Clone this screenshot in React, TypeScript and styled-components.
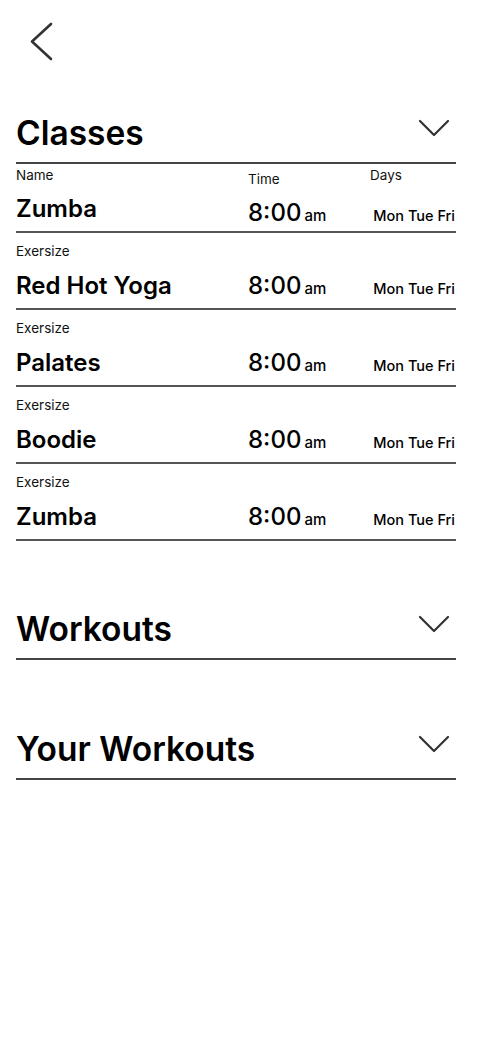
import React from 'react';
import styled, { createGlobalStyle } from 'styled-components';

const GlobalStyle = createGlobalStyle`
  * {
    box-sizing: border-box;
  }
  body {
    margin: 0;
    background: #fff;
    color: #000;
    font-family: Inter, 'Noto Sans', 'Liberation Sans', sans-serif;
  }
`;

const Page = styled.div`
  width: 478px;
  min-height: 1042px;
  padding: 0 22px 0 16px;
`;

const TopBar = styled.div`
  display: flex;
  padding: 19px 0 0 13px;
  height: 63px;
`;

const BackButton = styled.button`
  display: flex;
  padding: 0;
  border: 0;
  background: none;
  cursor: pointer;
`;

const Section = styled.section<{ $space: number }>`
  margin-top: ${(p) => p.$space}px;
`;

const SectionHead = styled.div`
  display: flex;
  justify-content: space-between;
  align-items: flex-start;
  padding: 2px 0 9px;
  border-bottom: 2px solid #444;
`;

const Title = styled.h2`
  margin: 0;
  font-size: 33.5px;
  line-height: 40px;
  font-weight: 600;
`;

const Toggle = styled.svg`
  margin: 6px 6px 0 0;
  flex-shrink: 0;
`;

const Row = styled.div<{ $first?: boolean }>`
  padding: ${(p) => (p.$first ? '3px 0 4px' : '10px 0 8px')};
  border-bottom: 2px solid #555;
`;

const LabelLine = styled.div<{ $first?: boolean }>`
  display: flex;
  align-items: flex-start;
  margin-bottom: ${(p) => (p.$first ? 7 : 12)}px;
`;

const Label = styled.span<{ $width?: number; $drop?: number }>`
  width: ${(p) => (p.$width ? `${p.$width}px` : 'auto')};
  margin-top: ${(p) => p.$drop ?? 0}px;
  font-size: 13.5px;
  line-height: 16px;
  font-weight: 400;
  color: #111;
`;

const ValueLine = styled.div`
  display: flex;
  align-items: baseline;
`;

const Name = styled.span<{ $raise?: boolean }>`
  width: 232px;
  align-self: ${(p) => (p.$raise ? 'flex-start' : 'baseline')};
  font-size: 24px;
  line-height: 29px;
  font-weight: 600;
`;

const Time = styled.span<{ $drop?: number }>`
  width: 122px;
  padding-top: ${(p) => p.$drop ?? 0}px;
  font-size: 24px;
  line-height: 29px;
  font-weight: 500;
`;

const Meridiem = styled.span`
  margin-left: 3px;
  font-size: 15px;
  line-height: 1;
  font-weight: 500;
`;

const Days = styled.span`
  flex: 1;
  text-align: right;
  padding-right: 1px;
  font-size: 14.5px;
  line-height: 18px;
  font-weight: 550;
  white-space: nowrap;
`;

type ClassItem = { name: string; time: string; meridiem: string; days: string };

const classes: ClassItem[] = [
  { name: 'Zumba', time: '8:00', meridiem: 'am', days: 'Mon Tue Fri' },
  { name: 'Red Hot Yoga', time: '8:00', meridiem: 'am', days: 'Mon Tue Fri' },
  { name: 'Palates', time: '8:00', meridiem: 'am', days: 'Mon Tue Fri' },
  { name: 'Boodie', time: '8:00', meridiem: 'am', days: 'Mon Tue Fri' },
  { name: 'Zumba', time: '8:00', meridiem: 'am', days: 'Mon Tue Fri' },
];

function ChevronDown() {
  return (
    <Toggle width="32" height="18" viewBox="0 0 32 18" fill="none">
      <path d="M2 2 L16 16 L30 2" stroke="#333" strokeWidth="2.2" strokeLinecap="round" strokeLinejoin="round" />
    </Toggle>
  );
}

function SectionHeading({ title }: { title: string }) {
  return (
    <SectionHead>
      <Title>{title}</Title>
      <ChevronDown />
    </SectionHead>
  );
}

function ClassRow({ item, first }: { item: ClassItem; first?: boolean }) {
  return (
    <Row $first={first}>
      {first ? (
        <LabelLine $first>
          <Label $width={232}>Name</Label>
          <Label $width={122} $drop={4}>
            Time
          </Label>
          <Label>Days</Label>
        </LabelLine>
      ) : (
        <LabelLine>
          <Label>Exersize</Label>
        </LabelLine>
      )}
      <ValueLine>
        <Name $raise={first}>{item.name}</Name>
        <Time $drop={first ? 4 : 0}>
          {item.time}
          <Meridiem>{item.meridiem}</Meridiem>
        </Time>
        <Days>{item.days}</Days>
      </ValueLine>
    </Row>
  );
}

export default function App() {
  return (
    <>
      <GlobalStyle />
      <Page>
        <TopBar>
          <BackButton aria-label="Back">
            <svg width="26" height="44" viewBox="0 0 26 44" fill="none">
              <path d="M22 5 L3 22.5 L22 40" stroke="#333" strokeWidth="2.6" strokeLinecap="round" strokeLinejoin="round" />
            </svg>
          </BackButton>
        </TopBar>

        <Section $space={48}>
          <SectionHeading title="Classes" />
          {classes.map((item, i) => (
            <ClassRow key={i} item={item} first={i === 0} />
          ))}
        </Section>

        <Section $space={66}>
          <SectionHeading title="Workouts" />
        </Section>

        <Section $space={67}>
          <SectionHeading title="Your Workouts" />
        </Section>
      </Page>
    </>
  );
}
